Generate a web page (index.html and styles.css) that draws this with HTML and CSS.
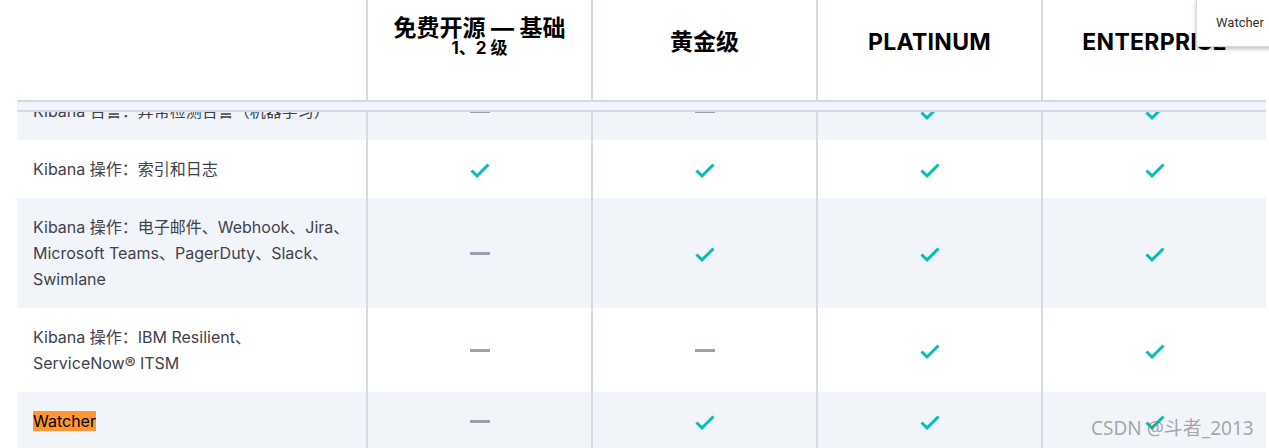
FILE: index.html
```html
<!DOCTYPE html>
<html lang="zh-CN">
<head>
<meta charset="utf-8">
<title>Kibana 功能对比</title>
<link rel="stylesheet" href="styles.css">
</head>
<body>
<div class="page">
  <div class="table">
    <div class="row alt">
      <div class="cell feature">Kibana 告警：异常检测告警（机器学习）</div>
      <div class="cell mark"><span class="dash"></span></div>
      <div class="cell mark"><span class="dash"></span></div>
      <div class="cell mark"><svg class="check" viewBox="0 0 20 16"><path d="M1.5 7.5 L7 13 L18.5 1.5"/></svg></div>
      <div class="cell mark"><svg class="check" viewBox="0 0 20 16"><path d="M1.5 7.5 L7 13 L18.5 1.5"/></svg></div>
    </div>
    <div class="row">
      <div class="cell feature">Kibana 操作：索引和日志</div>
      <div class="cell mark"><svg class="check" viewBox="0 0 20 16"><path d="M1.5 7.5 L7 13 L18.5 1.5"/></svg></div>
      <div class="cell mark"><svg class="check" viewBox="0 0 20 16"><path d="M1.5 7.5 L7 13 L18.5 1.5"/></svg></div>
      <div class="cell mark"><svg class="check" viewBox="0 0 20 16"><path d="M1.5 7.5 L7 13 L18.5 1.5"/></svg></div>
      <div class="cell mark"><svg class="check" viewBox="0 0 20 16"><path d="M1.5 7.5 L7 13 L18.5 1.5"/></svg></div>
    </div>
    <div class="row alt">
      <div class="cell feature">Kibana 操作：电子邮件、Webhook、Jira、<br>Microsoft Teams、PagerDuty、Slack、<br>Swimlane</div>
      <div class="cell mark"><span class="dash"></span></div>
      <div class="cell mark"><svg class="check" viewBox="0 0 20 16"><path d="M1.5 7.5 L7 13 L18.5 1.5"/></svg></div>
      <div class="cell mark"><svg class="check" viewBox="0 0 20 16"><path d="M1.5 7.5 L7 13 L18.5 1.5"/></svg></div>
      <div class="cell mark"><svg class="check" viewBox="0 0 20 16"><path d="M1.5 7.5 L7 13 L18.5 1.5"/></svg></div>
    </div>
    <div class="row">
      <div class="cell feature">Kibana 操作：IBM Resilient、<br>ServiceNow® ITSM</div>
      <div class="cell mark"><span class="dash"></span></div>
      <div class="cell mark"><span class="dash"></span></div>
      <div class="cell mark"><svg class="check" viewBox="0 0 20 16"><path d="M1.5 7.5 L7 13 L18.5 1.5"/></svg></div>
      <div class="cell mark"><svg class="check" viewBox="0 0 20 16"><path d="M1.5 7.5 L7 13 L18.5 1.5"/></svg></div>
    </div>
    <div class="row alt">
      <div class="cell feature"><mark class="hit">Watcher</mark></div>
      <div class="cell mark"><span class="dash"></span></div>
      <div class="cell mark"><svg class="check" viewBox="0 0 20 16"><path d="M1.5 7.5 L7 13 L18.5 1.5"/></svg></div>
      <div class="cell mark"><svg class="check" viewBox="0 0 20 16"><path d="M1.5 7.5 L7 13 L18.5 1.5"/></svg></div>
      <div class="cell mark"><svg class="check" viewBox="0 0 20 16"><path d="M1.5 7.5 L7 13 L18.5 1.5"/></svg></div>
    </div>
  </div>

  <div class="thead">
    <div class="head-row">
      <div class="hcell blank"></div>
      <div class="hcell tier tier-first">
        <span class="tier-name">免费开源 — 基础</span>
        <span class="tier-sub">1、2 级</span>
      </div>
      <div class="hcell tier"><span class="tier-name">黄金级</span></div>
      <div class="hcell tier"><span class="tier-name latin">PLATINUM</span></div>
      <div class="hcell tier"><span class="tier-name latin">ENTERPRISE</span></div>
    </div>
    <div class="head-band"></div>
  </div>

  <div class="tooltip">Watcher</div>
  <div class="watermark">CSDN @斗者_2013</div>
</div>
</body>
</html>
```

FILE: styles.css
```css
* { box-sizing: border-box; }

html, body {
  margin: 0;
  padding: 0;
  background: #ffffff;
}

.page {
  position: relative;
  width: 1269px;
  height: 448px;
  overflow: hidden;
  font-family: Inter, "Noto Sans CJK SC", sans-serif;
}

/* ---------- body table ---------- */
.table {
  padding-top: 82px;
  padding-left: 17px;
}

.row {
  display: grid;
  grid-template-columns: 349px repeat(4, 225px);
  width: 1249px;
  background: #ffffff;
}

.row.alt {
  background: #f1f4f8;
}

.cell {
  padding: 16px;
  font-size: 16px;
  line-height: 26px;
  color: #3f424c;
}

.feature {
  padding-right: 8px;
}

.mark {
  border-left: 2px solid #d3dae6;
  display: flex;
  align-items: center;
  justify-content: center;
}

.check {
  width: 20px;
  height: 16px;
  margin-top: 3px;
  fill: none;
  stroke: #00bfb3;
  stroke-width: 3;
}

.dash {
  display: block;
  width: 20px;
  height: 3px;
  background: #98a2b3;
}

.hit {
  background: #ff9632;
  color: #000000;
  padding: 0;
}

/* ---------- sticky header overlay ---------- */
.thead {
  position: absolute;
  top: 0;
  left: 17px;
  width: 1249px;
  background: #ffffff;
}

.head-row {
  display: grid;
  grid-template-columns: 349px repeat(4, 225px);
  height: 102px;
  border-bottom: 2px solid #d3dae6;
}

.hcell {
  display: flex;
  flex-direction: column;
  align-items: center;
  justify-content: center;
  padding-bottom: 16px;
  color: #000000;
}

.tier {
  border-left: 2px solid #d3dae6;
}

.tier-first {
  padding-bottom: 27px;
}

.tier-name {
  font-size: 23px;
  font-weight: 700;
  line-height: 24px;
}

.tier-name.latin {
  letter-spacing: 0.3px;
}

.tier-sub {
  font-size: 17px;
  font-weight: 700;
  line-height: 17px;
}

.head-band {
  height: 10px;
  background: #f1f4f8;
  border-bottom: 2px solid #d3dae6;
}

/* ---------- overlays ---------- */
.tooltip {
  position: absolute;
  top: -1px;
  left: 1196px;
  width: 100px;
  height: 48px;
  padding: 15px 0 0 19px;
  background: #ffffff;
  border: 1px solid #d9d9d9;
  box-shadow: 0 2px 4px rgba(0, 0, 0, 0.25);
  font-family: Roboto, "Liberation Sans", sans-serif;
  font-size: 13px;
  line-height: 16px;
  color: #333333;
}

.watermark {
  position: absolute;
  left: 1091px;
  top: 415px;
  font-family: "Noto Sans", "Noto Sans CJK SC", sans-serif;
  font-size: 19px;
  line-height: 26px;
  color: rgba(120, 120, 120, 0.65);
  white-space: nowrap;
}
```
